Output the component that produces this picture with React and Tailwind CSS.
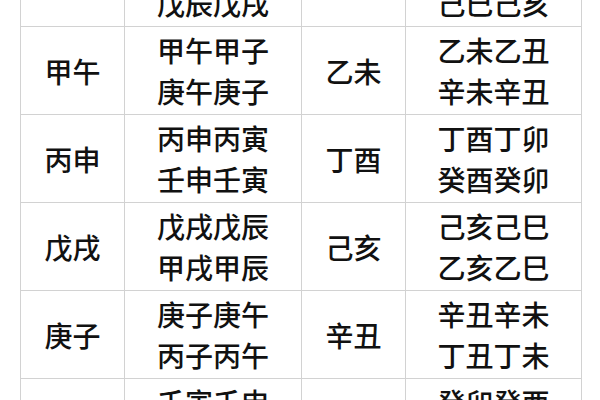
const rows = [
  { a: '壬辰', b: ['壬辰壬戌', '戊辰戊戌'], c: '癸巳', d: ['癸巳癸亥', '己巳己亥'] },
  { a: '甲午', b: ['甲午甲子', '庚午庚子'], c: '乙未', d: ['乙未乙丑', '辛未辛丑'] },
  { a: '丙申', b: ['丙申丙寅', '壬申壬寅'], c: '丁酉', d: ['丁酉丁卯', '癸酉癸卯'] },
  { a: '戊戌', b: ['戊戌戊辰', '甲戌甲辰'], c: '己亥', d: ['己亥己巳', '乙亥乙巳'] },
  { a: '庚子', b: ['庚子庚午', '丙子丙午'], c: '辛丑', d: ['辛丑辛未', '丁丑丁未'] },
  { a: '壬寅', b: ['壬寅壬申', '戊寅戊申'], c: '癸卯', d: ['癸卯癸酉', '己卯己酉'] },
]

const cell = 'border border-[#d2d2d2] h-[88px] p-0 text-center align-middle'

function Pair({ lines }) {
  return (
    <div className="flex flex-col items-center leading-[41px]">
      {lines.map((l) => (
        <span key={l}>{l}</span>
      ))}
    </div>
  )
}

export default function App() {
  return (
    <div className="h-[400px] w-[600px] overflow-hidden bg-white">
      <div className="-mt-[62px] pl-[20px]">
        <table
          className="w-[561px] table-fixed border-collapse text-[28px] font-medium text-[#111]"
          style={{ fontFamily: '"Noto Sans CJK SC", "Noto Sans", sans-serif' }}
        >
          <colgroup>
            <col className="w-[104px]" />
            <col className="w-[177px]" />
            <col className="w-[104px]" />
            <col className="w-[176px]" />
          </colgroup>
          <tbody>
            {rows.map((r) => (
              <tr key={r.a}>
                <td className={cell}>{r.a}</td>
                <td className={cell}>
                  <Pair lines={r.b} />
                </td>
                <td className={cell}>{r.c}</td>
                <td className={cell}>
                  <Pair lines={r.d} />
                </td>
              </tr>
            ))}
          </tbody>
        </table>
      </div>
    </div>
  )
}
